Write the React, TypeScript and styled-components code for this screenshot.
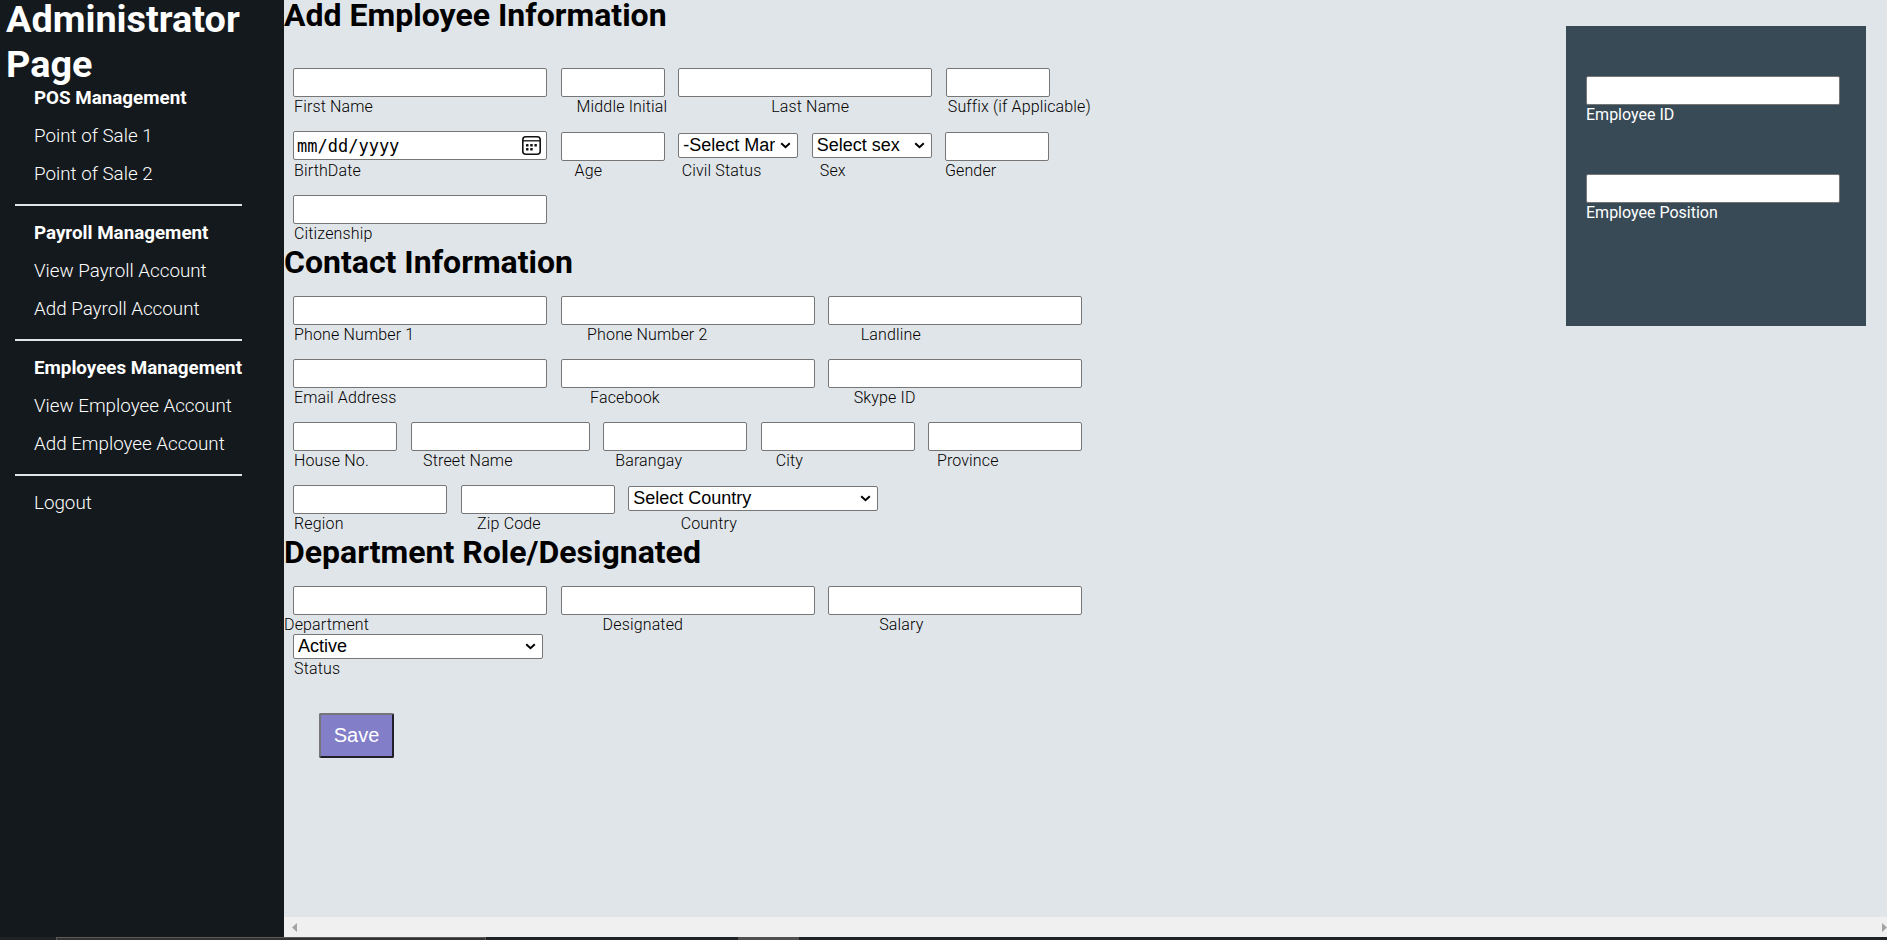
import React from "react";
import styled, { createGlobalStyle } from "styled-components";

const GlobalStyle = createGlobalStyle`
  * { box-sizing: border-box; margin: 0; padding: 0; }
  body { background: #e0e5e9; font-family: Roboto, "Liberation Sans", sans-serif; overflow: hidden; }
`;

const Screen = styled.div`
  display: flex;
  flex-direction: column;
  width: 1887px;
  height: 940px;
  overflow: hidden;
`;

const Page = styled.div`
  display: flex;
  height: 937px;
`;

const Sidebar = styled.nav`
  flex: none;
  width: 284px;
  padding-left: 6px;
  background: #14191d;
  color: #fff;
`;

const SidebarTitle = styled.h1`
  font-size: 37.8px;
  line-height: 45px;
  margin-top: -3px;
  font-weight: 700;
`;

const NavGroup = styled.ul`
  list-style: none;
  width: 227px;
  margin-left: 9px;
  padding: 0 0 9px 19px;
  border-bottom: 2px solid #dfe5e9;
  margin-bottom: 16px;
  &:last-child { border-bottom: none; }
`;

const NavItem = styled.li<{ $heading?: boolean }>`
  height: 38px;
  line-height: 22px;
  padding-bottom: 16px;
  font-size: 18.8px;
  white-space: nowrap;
  font-weight: ${(p) => (p.$heading ? 700 : 300)};
  &:last-child { height: 32px; }
`;

const Workspace = styled.div`
  flex: 1;
  min-width: 0;
  display: flex;
  flex-direction: column;
  background: #e0e5e9;
`;

const Content = styled.main`
  flex: 1;
  display: flex;
  justify-content: space-between;
  align-items: flex-start;
`;

const Form = styled.form`
  display: flex;
  flex-direction: column;
`;

const Heading = styled.h2<{ $gap: number; $height?: number }>`
  font-size: 32px;
  line-height: ${(p) => p.$height ?? 36}px;
  height: ${(p) => p.$height ?? 36}px;
  margin-bottom: ${(p) => p.$gap}px;
  font-weight: 700;
  color: #000;
`;

const Row = styled.div<{ $height?: number }>`
  display: flex;
  gap: 13.6px;
  height: ${(p) => p.$height ?? 63}px;
  padding-left: 9px;
`;

const Field = styled.label<{ $width: number }>`
  flex: none;
  display: block;
  width: ${(p) => p.$width}px;
`;

const ControlSlot = styled.span<{ $top: number; $height: number }>`
  display: block;
  height: ${(p) => p.$height}px;
  padding-top: ${(p) => p.$top}px;
`;

const TextInput = styled.input`
  display: block;
  width: 100%;
  height: 29px;
  border: 1px solid #767676;
  border-radius: 2px;
  background: #fff;
  font-size: 18px;
  outline: none;
`;

const SelectBox = styled.span`
  display: block;
  position: relative;

  svg {
    position: absolute;
    top: 9px;
    right: 7px;
    pointer-events: none;
  }
`;

const Select = styled.select`
  display: block;
  appearance: none;
  width: 100%;
  height: 25px;
  padding: 0 22px 1px 4px;
  border: 1px solid #767676;
  border-radius: 2px;
  background-color: #fff;
  color: #000;
  font: 18px "Liberation Sans", Arial, sans-serif;
`;

const DateInput = styled.span`
  display: flex;
  align-items: center;
  justify-content: space-between;
  height: 29px;
  border: 1px solid #767676;
  border-radius: 2px;
  background: #fff;
  padding: 0 5px 0 3px;
  color: #000;
  font: 17px "DejaVu Sans Mono", monospace;
`;

const Caption = styled.span<{ $indent?: number }>`
  display: block;
  margin-left: ${(p) => p.$indent ?? 0}px;
  font-size: 16px;
  line-height: 19px;
  font-weight: 300;
  letter-spacing: 0.15px;
  color: #000;
  white-space: nowrap;
`;

const SaveButton = styled.button`
  width: 75px;
  height: 45px;
  margin: 34px 0 0 35px;
  background: #827ec8;
  color: #fff;
  border: 2px solid;
  border-color: #76767a #21202a #21202a #76767a;
  border-radius: 2px;
  font: 20px "Liberation Sans", Arial, sans-serif;
`;

const EmployeeCard = styled.aside`
  width: 300px;
  height: 300px;
  margin: 26px 21px 0 0;
  padding: 50px 20px 0;
  background: #394a57;
`;

const CardField = styled.label`
  display: block;
  width: 254px;
  height: 98px;
`;

const CardCaption = styled(Caption)`
  color: #fff;
  font-weight: 400;
  letter-spacing: 0;
`;

const ScrollBar = styled.div`
  display: flex;
  justify-content: space-between;
  align-items: center;
  height: 20px;
  padding-left: 8px;
  padding-top: 1px;
  background: #f0f0f0;
`;

const TaskBar = styled.div`
  display: flex;
  height: 3px;
  background: #202326;
`;

const TaskWindow = styled.div`
  width: 430px;
  margin-left: 56px;
  border: 1px solid #5b5958;
  border-bottom: none;
  background: #353233;
`;

const TaskButton = styled.div`
  width: 61px;
  margin-left: 252px;
  background: #4f504f;
`;

function CalendarIcon() {
  return (
    <svg width="19" height="19" viewBox="0 0 19 19" fill="none" stroke="#111">
      <rect x="0.8" y="0.8" width="17.4" height="17.4" rx="3" strokeWidth="1.6" />
      <path d="M1 4.8H18" strokeWidth="1.3" />
      <g fill="#111" stroke="none">
        <rect x="4" y="8" width="2.5" height="2.5" rx="0.6" />
        <rect x="8.2" y="8" width="2.5" height="2.5" rx="0.6" />
        <rect x="12.4" y="8" width="2.5" height="2.5" rx="0.6" />
        <rect x="4" y="12" width="2.5" height="2.5" rx="0.6" />
        <rect x="8.2" y="12" width="2.5" height="2.5" rx="0.6" />
      </g>
    </svg>
  );
}

function Chevron() {
  return (
    <svg width="11" height="7" viewBox="0 0 11 7" fill="none" stroke="#000" strokeWidth="2">
      <path d="M1.2 1.3L5.5 5.2L9.8 1.3" />
    </svg>
  );
}

function Arrow({ d }: { d: string }) {
  return (
    <svg width="5" height="9" viewBox="0 0 5 9">
      <path d={d} fill="#a3a3a3" />
    </svg>
  );
}

type FieldSpec = {
  label: string;
  width: number;
  indent?: number;
  kind?: "text" | "select" | "date";
  value?: string;
  top?: number;
};

const navigation = [
  { title: "POS Management", links: ["Point of Sale 1", "Point of Sale 2"] },
  { title: "Payroll Management", links: ["View Payroll Account", "Add Payroll Account"] },
  { title: "Employees Management", links: ["View Employee Account", "Add Employee Account"] },
  { links: ["Logout"] },
];

function FormField({ spec, slot }: { spec: FieldSpec; slot: number }) {
  return (
    <Field $width={spec.width}>
      <ControlSlot $top={spec.top ?? 0} $height={slot}>
        {spec.kind === "select" ? (
          <SelectBox>
            <Select defaultValue={spec.value}>
              <option>{spec.value}</option>
            </Select>
            <Chevron />
          </SelectBox>
        ) : spec.kind === "date" ? (
          <DateInput>
            mm/dd/yyyy
            <CalendarIcon />
          </DateInput>
        ) : (
          <TextInput />
        )}
      </ControlSlot>
      <Caption $indent={spec.indent}>{spec.label}</Caption>
    </Field>
  );
}

function FormRow({ fields, height, slot = 29 }: { fields: FieldSpec[]; height?: number; slot?: number }) {
  return (
    <Row $height={height}>
      {fields.map((f) => (
        <FormField key={f.label} spec={f} slot={slot} />
      ))}
    </Row>
  );
}

export default function App() {
  return (
    <Screen>
      <GlobalStyle />
      <Page>
        <Sidebar>
          <SidebarTitle>Administrator Page</SidebarTitle>
          {navigation.map((group) => (
            <NavGroup key={group.links[0]}>
              {group.title && <NavItem $heading>{group.title}</NavItem>}
              {group.links.map((link) => (
                <NavItem key={link}>{link}</NavItem>
              ))}
            </NavGroup>
          ))}
        </Sidebar>
        <Workspace>
          <Content>
            <Form>
              <Heading $gap={38} $height={30}>Add Employee Information</Heading>
              <FormRow
                fields={[
                  { label: "First Name", width: 254, indent: 1 },
                  { label: "Middle Initial", width: 104, indent: 16 },
                  { label: "Last Name", width: 254, indent: 93 },
                  { label: "Suffix (if Applicable)", width: 104, indent: 2 },
                ]}
              />
              <FormRow
                height={64}
                slot={30}
                fields={[
                  { label: "BirthDate", width: 254, kind: "date", indent: 1 },
                  { label: "Age", width: 104, indent: 14, top: 1 },
                  { label: "Civil Status", width: 120, indent: 3.5, kind: "select", value: "-Select Marital Status-", top: 2 },
                  { label: "Sex", width: 120, indent: 8, kind: "select", value: "Select sex", top: 2 },
                  { label: "Gender", width: 104, indent: -0.5, top: 1 },
                ]}
              />
              <FormRow height={49} fields={[{ label: "Citizenship", width: 254, indent: 1 }]} />
              <Heading $gap={16}>Contact Information</Heading>
              <FormRow
                fields={[
                  { label: "Phone Number 1", width: 254, indent: 1 },
                  { label: "Phone Number 2", width: 254, indent: 26.5 },
                  { label: "Landline", width: 254, indent: 32.5 },
                ]}
              />
              <FormRow
                fields={[
                  { label: "Email Address", width: 254, indent: 1 },
                  { label: "Facebook", width: 254, indent: 29.5 },
                  { label: "Skype ID", width: 254, indent: 25.5 },
                ]}
              />
              <FormRow
                fields={[
                  { label: "House No.", width: 104, indent: 1 },
                  { label: "Street Name", width: 179, indent: 12.5 },
                  { label: "Barangay", width: 144, indent: 12 },
                  { label: "City", width: 154, indent: 15 },
                  { label: "Province", width: 154, indent: 8.5 },
                ]}
              />
              <FormRow
                height={49}
                fields={[
                  { label: "Region", width: 154, indent: 1 },
                  { label: "Zip Code", width: 154, indent: 16.5 },
                  { label: "Country", width: 250, indent: 52.5, kind: "select", value: "Select Country", top: 1 },
                ]}
              />
              <Heading $gap={16}>Department Role/Designated</Heading>
              <FormRow
                height={48}
                fields={[
                  { label: "Department", width: 254, indent: -9 },
                  { label: "Designated", width: 254, indent: 42 },
                  { label: "Salary", width: 254, indent: 51 },
                ]}
              />
              <FormRow
                height={45}
                slot={25}
                fields={[{ label: "Status", width: 250, indent: 1, kind: "select", value: "Active" }]}
              />
              <SaveButton type="button">Save</SaveButton>
            </Form>
            <EmployeeCard>
              <CardField>
                <TextInput />
                <CardCaption>Employee ID</CardCaption>
              </CardField>
              <CardField>
                <TextInput />
                <CardCaption>Employee Position</CardCaption>
              </CardField>
            </EmployeeCard>
          </Content>
          <ScrollBar>
            <Arrow d="M5 0V9L0 4.5Z" />
            <Arrow d="M0 0V9L5 4.5Z" />
          </ScrollBar>
        </Workspace>
      </Page>
      <TaskBar>
        <TaskWindow />
        <TaskButton />
      </TaskBar>
    </Screen>
  );
}
